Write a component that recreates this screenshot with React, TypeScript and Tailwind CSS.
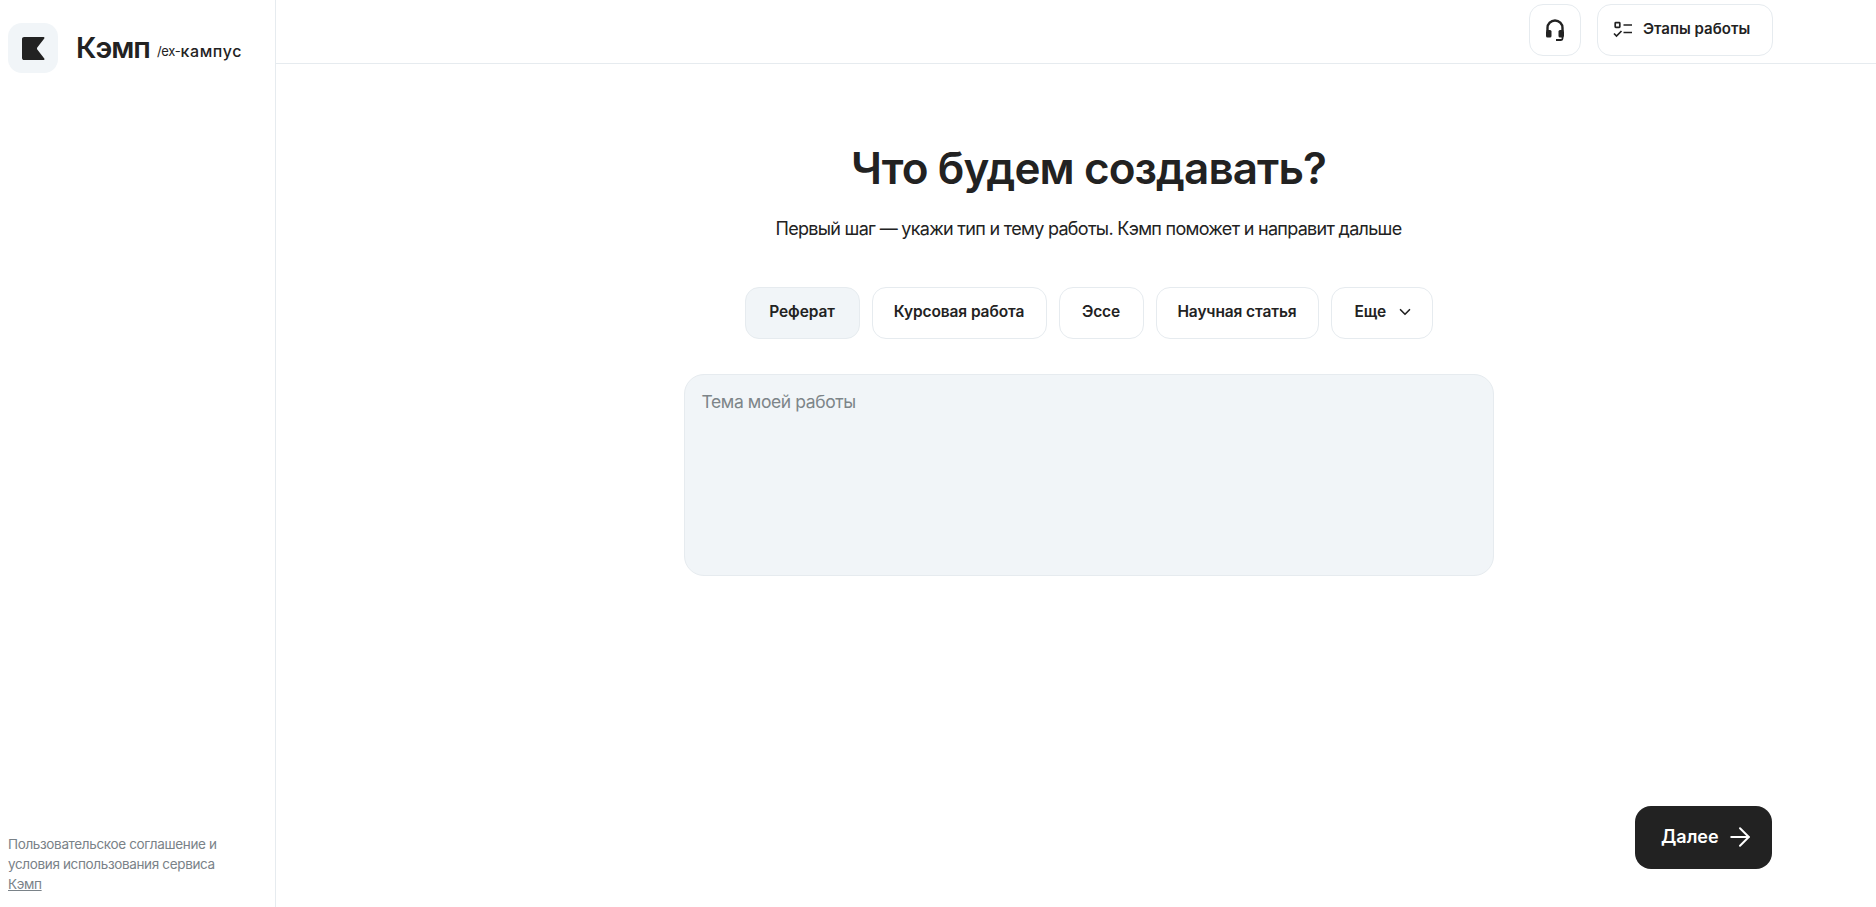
import { ArrowRight, ChevronDown } from "lucide-react";

const chips = [
  { label: "Реферат", width: "w-[115px]" },
  { label: "Курсовая работа", width: "w-[175px]" },
  { label: "Эссе", width: "w-[85px]" },
  { label: "Научная статья", width: "w-[163px]" },
];

function Logo() {
  return (
    <svg viewBox="0 0 22 22" className="w-[23px] h-[23px]" fill="#222222">
      <path d="M2 0h18.6c0.8 0 1.2 0.9 0.7 1.5L14.8 9.8c-0.6 0.7-0.6 1.7 0 2.4l6.5 8.3c0.5 0.6 0.1 1.5-0.7 1.5H2c-1.1 0-2-0.9-2-2V2c0-1.1 0.9-2 2-2z" />
    </svg>
  );
}

function Headset() {
  return (
    <svg viewBox="0 0 20 22" className="w-[20px] h-[22px]" fill="none">
      <path d="M2.5 12V9a7.5 7.5 0 0 1 15 0v3" stroke="#222222" strokeWidth="2.4" />
      <rect x="1" y="11" width="5.5" height="7.5" rx="1.5" fill="#222222" />
      <rect x="13.5" y="11" width="5.5" height="7.5" rx="1.5" fill="#222222" />
      <path d="M17.5 18v1.5c0 .8-.6 1.5-1.5 1.5h-5" stroke="#222222" strokeWidth="1.8" />
    </svg>
  );
}

function Steps() {
  return (
    <svg viewBox="0 0 20 18" className="w-[20px] h-[18px]" fill="none" stroke="#222222" strokeWidth="1.7">
      <rect x="2.2" y="1.7" width="4.6" height="4.6" rx="0.6" />
      <path d="M10.5 4h8.5M10.5 11.5h8.5" />
      <path d="M1 12.5l2.5 2.5L8.5 10" />
    </svg>
  );
}

export default function App() {
  return (
    <div className="flex h-[907px] bg-white text-[#222222] font-['Inter',sans-serif] overflow-hidden">
      <aside className="w-[276px] shrink-0 border-r border-[#e6ebef] flex flex-col justify-between pl-2 pt-[23px] pb-[13px]">
        <div className="flex items-center">
          <div className="w-[50px] h-[50px] rounded-[14px] bg-[#f1f5f8] flex items-center justify-center">
            <Logo />
          </div>
          <span className="ml-[18px] mb-[2px] text-[29px] leading-none font-semibold tracking-[-1px]">Кэмп</span>
          <span className="ml-[7px] mt-[6px] text-[13px] leading-none tracking-[-0.3px]">/ex-</span>
          <span className="mt-[6px] text-[16px] leading-none font-medium tracking-[0.6px]">кампус</span>
        </div>
        <p className="text-[13.5px] leading-[20px] text-[#7a8288] w-[225px] tracking-[-0.35px]">
          Пользовательское соглашение и условия использования сервиса{" "}
          <a className="underline">Кэмп</a>
        </p>
      </aside>

      <main className="flex-1 flex flex-col">
        <header className="h-[64px] shrink-0 border-b border-[#e6ebef] flex items-start justify-end gap-4 pt-1 pr-[103px]">
          <button className="w-[52px] h-[52px] rounded-[14px] border border-[#e6ebef] flex items-center justify-center">
            <Headset />
          </button>
          <button className="w-[176px] h-[52px] rounded-[14px] border border-[#e6ebef] flex items-center pl-[15px] gap-[10px] text-[15px] font-semibold">
            <Steps />
            <span className="mb-[2px]">Этапы работы</span>
          </button>
        </header>

        <div className="flex-1 flex flex-col items-center pl-[25px]">
          <h1 className="mt-[78px] text-[44px] leading-[52px] font-semibold tracking-[-0.9px]">Что будем создавать?</h1>
          <p className="mt-[23px] text-[18px] leading-[24px] tracking-[-0.7px]">
            Первый шаг — укажи тип и тему работы. Кэмп поможет и направит дальше
          </p>
          <div className="mt-[46px] flex gap-3 items-center">
            {chips.map((c, i) => (
              <button
                key={c.label}
                className={
                  c.width +
                  " h-[52px] pb-[2px] rounded-[14px] border border-[#e6ebef] text-[15.5px] font-semibold tracking-[-0.1px] " +
                  (i === 0 ? "bg-[#f1f5f8]" : "bg-white")
                }
              >
                {c.label}
              </button>
            ))}
            <button className="w-[102px] h-[52px] pb-[2px] pl-[23px] rounded-[14px] border border-[#e6ebef] text-[15.5px] font-semibold tracking-[-0.1px] flex items-center gap-[10px]">
              Еще
              <ChevronDown className="w-[18px] h-[18px]" strokeWidth={2.2} />
            </button>
          </div>
          <textarea
            className="mt-[35px] w-[810px] h-[202px] rounded-[20px] border border-[#e6ebef] bg-[#f1f5f8] px-[17px] py-[14px] text-[17.5px] leading-[26px] tracking-[-0.4px] outline-none resize-none placeholder:text-[#7d8589]"
            placeholder="Тема моей работы"
          />
        </div>

        <div className="flex justify-end pr-[104px] pb-[38px]">
          <button className="w-[137px] h-[63px] pb-[2px] pl-[26px] rounded-[16px] bg-[#222222] text-white flex items-center gap-[6px] text-[18px] font-semibold">
            Далее
            <ArrowRight className="w-[30px] h-[30px]" strokeWidth={1.6} />
          </button>
        </div>
      </main>
    </div>
  );
}
